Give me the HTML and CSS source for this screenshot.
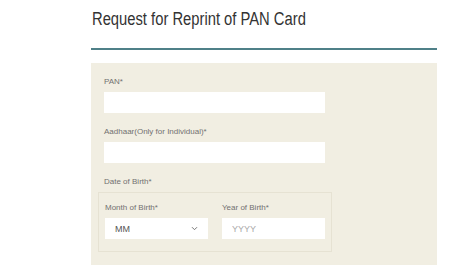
FILE: index.html
```html
<!DOCTYPE html>
<html>
<head>
    <title>Reprint of PAN Card</title>
    <meta charset="utf-8">
    <link rel="stylesheet" href="styles.css">
</head>
<body>
<div class="page">
    <h1 class="title"><span>Request for Reprint of PAN Card</span></h1>
    <form class="panel">
        <div class="field">
            <label for="pan">PAN*</label>
            <input type="text" id="pan" class="wide">
        </div>
        <div class="field">
            <label for="aadhaar">Aadhaar(Only for Individual)*</label>
            <input type="text" id="aadhaar" class="wide">
        </div>
        <div class="field">
            <label>Date of Birth*</label>
            <div class="dob">
                <div class="field small">
                    <label for="month">Month of Birth*</label>
                    <div class="select">
                        <span>MM</span>
                        <svg width="7" height="5" viewBox="0 0 7 5"><path d="M1 1.2 L3.5 3.7 L6 1.2" fill="none" stroke="#777" stroke-width="1"/></svg>
                    </div>
                </div>
                <div class="field small">
                    <label for="year">Year of Birth*</label>
                    <input type="text" id="year" placeholder="YYYY">
                </div>
            </div>
        </div>
    </form>
</div>
</body>
</html>
```

FILE: styles.css
```css
/* Page */
body {
    margin: 0;
    background: #fff;
    font-family: 'Liberation Sans', Arial, sans-serif;
}

.page {
    width: 346px;
    margin-left: 91px;
}

.title {
    font-size: 18px;
    font-weight: normal;
    color: #333;
    margin: 0;
    padding: 9px 0 0 1px;
    height: 39px;
    border-bottom: 2px solid #4f8088;
}

.title span {
    display: inline-block;
    transform: scaleX(0.82);
    transform-origin: left center;
}

/* Form panel */
.panel {
    background-color: #f1eee2;
    margin-top: 13px;
    padding: 13px 12px 13px 13px;
    height: 176px;
    box-sizing: content-box;
}

.field {
    display: flex;
    flex-direction: column;
    margin-bottom: 13px;
}

label {
    font-size: 8px;
    color: #717171;
    margin-top: 1px;
    margin-bottom: 6px;
}

input[type=text] {
    border: none;
    background: #fff;
    height: 21px;
    box-sizing: border-box;
    padding: 0 10px;
    font-size: 9px;
    font-family: 'Liberation Sans', Arial, sans-serif;
}

input.wide {
    width: 221px;
}

input::placeholder {
    color: #aaa;
}

/* Date of birth group */
.dob {
    display: flex;
    gap: 14px;
    width: 234px;
    margin-left: -6px;
    padding: 9px 6px 12px 6px;
    box-sizing: border-box;
    border: 1px solid #e6e2d3;
}

.dob .field {
    margin-bottom: 0;
    width: 104px;
}

.dob input {
    width: 103px;
}

.select {
    background: #fff;
    height: 21px;
    display: flex;
    align-items: center;
    justify-content: space-between;
    padding: 0 10px;
    font-size: 9px;
    color: #555;
}
```
